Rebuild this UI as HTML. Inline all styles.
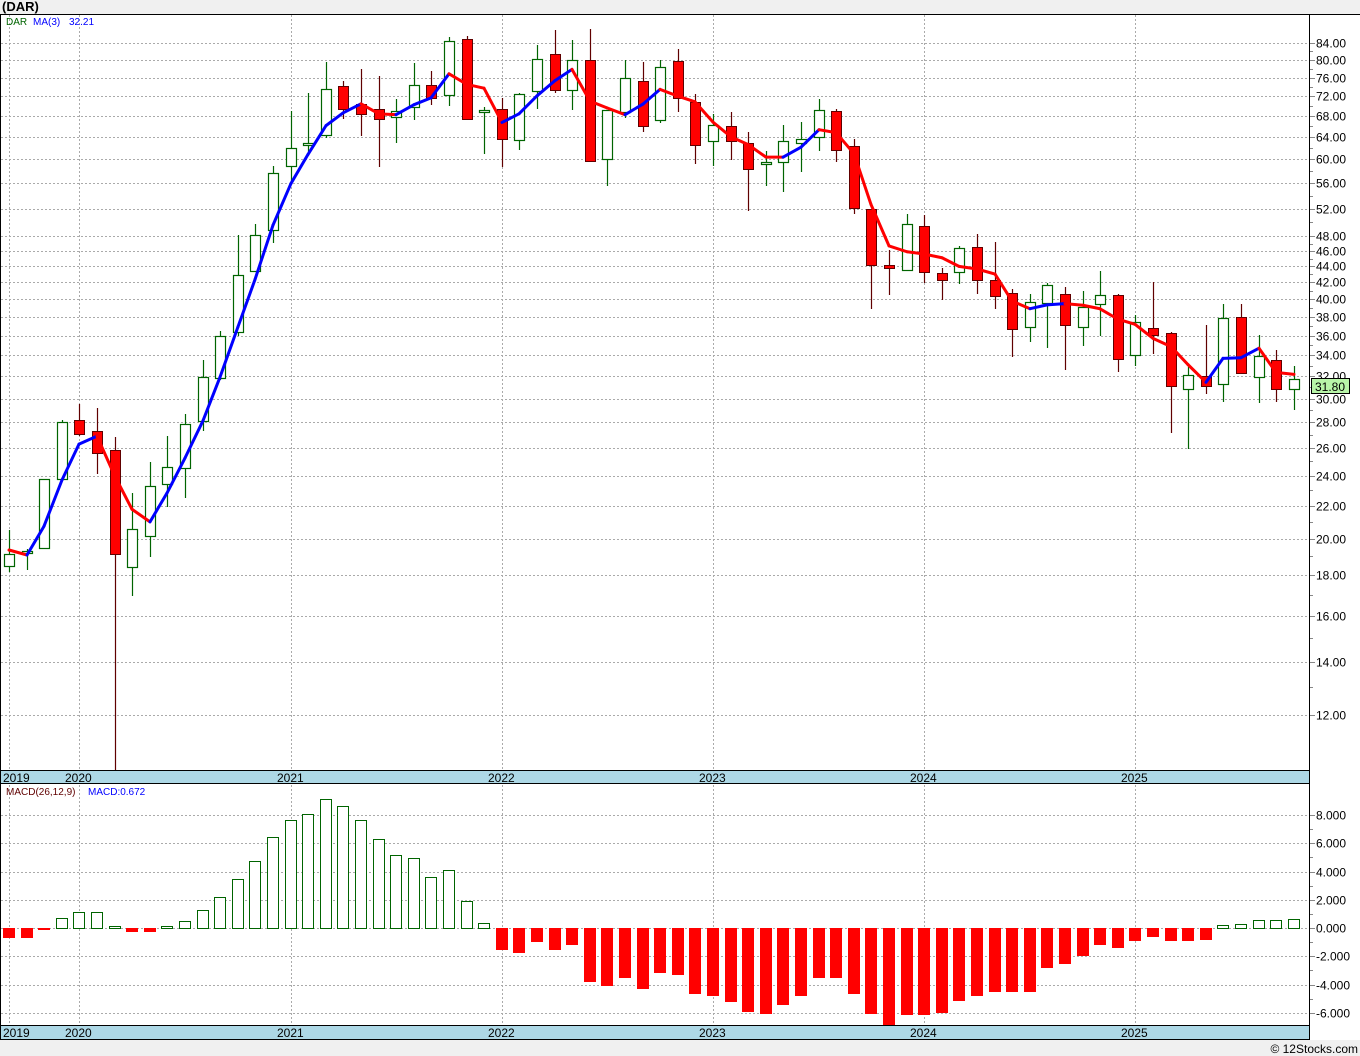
<!DOCTYPE html>
<html><head><meta charset="utf-8"><style>
html,body{margin:0;padding:0;background:#fff;}
body{width:1360px;height:1056px;overflow:hidden;position:relative;font-family:"Liberation Sans",sans-serif;}
svg{position:absolute;left:0;top:0;}
</style></head><body>
<svg id="s" width="1360" height="1056" xmlns="http://www.w3.org/2000/svg" font-family="Liberation Sans, sans-serif">
<rect x="0" y="0" width="1360" height="1056" fill="#fff"/>
<rect x="0" y="0" width="1360" height="14" fill="#f0f0f0"/>
<text x="2" y="11" font-size="13" font-weight="bold" fill="#000">(DAR)</text>
<rect x="0" y="1040" width="1360" height="16" fill="#f0f0f0"/>
<text x="1358" y="1053" font-size="12" fill="#000" text-anchor="end">© 12Stocks.com</text>
<g id="g"></g>
</svg>
<script>
var NS="http://www.w3.org/2000/svg",g=document.getElementById("g");
function el(t,a,txt){var e=document.createElementNS(NS,t);for(var k in a)e.setAttribute(k,a[k]);if(txt!==undefined)e.textContent=txt;g.appendChild(e);return e;}
function py(p){return 43+345.3*Math.log(84/p);}
function yp(y){return 84*Math.exp(-(y-43)/345.3);}
var yrs=[[9,"2019"],[79,"2020"],[291,"2021"],[502,"2022"],[713,"2023"],[924,"2024"],[1135,"2025"]];
var lv=[12,14,16,18,20,22,24,26,28,30,32,34,36,38,40,42,44,46,48,52,56,60,64,68,72,76,80,84];
lv.forEach(function(p){var y=Math.round(py(p))+.5;el("line",{x1:1,y1:y,x2:1309,y2:y,stroke:"#aaa","stroke-dasharray":"2,2"});el("line",{x1:1309,y1:y,x2:1315,y2:y,stroke:"#888"});el("text",{x:1316,y:y+4,"font-size":"12",fill:"#000"},p.toFixed(2));});
[50,54,58,62,66,70,74,78,82,13,15,17,19,21,23,25,27,29,31,33,35,37,39,41,43,45,47].forEach(function(p){var y=Math.round(py(p))+.5;el("line",{x1:1309,y1:y,x2:1313,y2:y,stroke:"#888"});});
[8,6,4,2,0,-2,-4,-6].forEach(function(v){var y=Math.round(928-14.125*v)+.5;el("line",{x1:1,y1:y,x2:1309,y2:y,stroke:"#aaa","stroke-dasharray":"2,2"});el("line",{x1:1309,y1:y,x2:1315,y2:y,stroke:"#888"});el("text",{x:1316,y:y+4,"font-size":"12",fill:"#000"},v.toFixed(3));});
[7,5,3,1,-1,-3,-5].forEach(function(v){var y=Math.round(928-14.125*v)+.5;el("line",{x1:1309,y1:y,x2:1313,y2:y,stroke:"#888"});});
yrs.forEach(function(a){el("line",{x1:a[0]+.5,y1:15,x2:a[0]+.5,y2:770,stroke:"#aaa","stroke-dasharray":"2,2"});el("line",{x1:a[0]+.5,y1:785,x2:a[0]+.5,y2:1025,stroke:"#aaa","stroke-dasharray":"2,2"});});
var C=[[554,566,530,572,1],[551,553,549,570,1],[479,548,479,548,1],[422,479,420,479,1],[420,434,404,436,0],[431,453,408,474,0],[450,554,437,770,0],[529,567,493,596,1],[486,536,462,557,1],[467,484,436,507,1],[424,468,414,498,1],[377,421,360,431,1],[336,378,331,380,1],[275,332,235,336,1],[235,271,224,243,1],[173,230,166,243,1],[148,166,111,183,1],[143,145,93,152,1],[89,135,62,138,1],[86,109,81,119,0],[104,114,69,136,0],[109,119,76,167,0],[111,117,99,143,1],[85,107,63,120,1],[85,98,71,105,0],[41,95,37,106,1],[39,119,36,119,0],[110,112,107,154,1],[109,139,98,167,0],[94,140,93,150,1],[59,91,45,109,1],[54,90,30,93,0],[60,90,40,110,1],[60,161,29,161,0],[110,159,110,186,1],[78,112,60,118,1],[81,126,62,132,0],[67,120,60,123,1],[61,98,49,112,0],[102,145,94,164,0],[125,141,114,166,1],[126,141,112,160,0],[143,169,132,211,0],[162,164,151,186,1],[141,162,125,192,1],[139,143,122,172,1],[110,137,99,151,1],[111,150,109,162,0],[146,208,139,214,0],[209,265,209,309,0],[265,268,250,295,0],[224,270,214,271,1],[226,272,215,283,0],[273,280,268,300,0],[248,272,246,284,1],[247,280,234,294,0],[280,296,242,309,0],[293,329,289,357,0],[302,327,294,342,1],[285,303,283,348,1],[294,325,287,370,0],[307,327,291,346,1],[295,304,271,336,1],[295,359,294,372,0],[322,355,315,366,1],[328,335,282,354,0],[333,386,332,433,0],[375,389,367,449,1],[376,386,325,394,0],[318,384,304,402,1],[317,373,304,374,0],[356,377,335,403,1],[360,389,350,402,0],[379,389,366,410,1]];
function cx(i){return Math.round(9+17.6*i);}
var M=[938,938,930,918,912,912,926,932,932,926,921,910,897,879,861,837,820,814,799,806,820,839,855,858,877,870,901,923,950,953,942,950,945,982,986,978,989,973,975,994,996,1002,1012,1014,1005,996,978,978,994,1014,1025,1015,1015,1013,1001,996,992,992,992,968,964,956,945,948,941,937,941,941,940,925,924,920,920,919];
M.forEach(function(y,i){var x=cx(i)-6;if(y<928)el("rect",{x:x+.5,y:y+.5,width:11,height:928-y,fill:"#fff",stroke:"#006400"});else el("rect",{x:x,y:928,width:12,height:y-928,fill:"#f00"});});
C.forEach(function(c,i){var x=cx(i);var up=c[4];var wc=up?"#006400":"#600000";
el("line",{x1:x+.5,y1:c[2],x2:x+.5,y2:c[3],stroke:wc,"stroke-width":1.2});
var h=Math.max(c[1]-c[0],1);
if(up)el("rect",{x:x-4.5,y:c[0]+.5,width:10,height:h,fill:"#fff",stroke:"#006400","stroke-width":1.2});
else el("rect",{x:x-4.5,y:c[0]+.5,width:10,height:h,fill:"#f00",stroke:"#600000","stroke-width":1});});
var cl=C.map(function(c){return yp(c[4]?c[0]:c[1]);});
var ma=cl.map(function(v,i){var a=cl.slice(Math.max(0,i-2),i+1);return py(a.reduce(function(s,x){return s+x;},0)/a.length);});
ma[0]=550;ma[1]=Math.max(ma[1],555);
for(var i=1;i<ma.length;i++){var col=ma[i]<ma[i-1]?"#0000ff":"#ff0000";el("line",{x1:cx(i-1),y1:ma[i-1],x2:cx(i),y2:ma[i],stroke:col,"stroke-width":3,"stroke-linecap":"round"});}
el("line",{x1:0,y1:14.5,x2:1360,y2:14.5,stroke:"#000"});
el("line",{x1:.5,y1:14,x2:.5,y2:1040,stroke:"#000"});
el("line",{x1:1309.5,y1:14,x2:1309.5,y2:1040,stroke:"#000"});
[[770,784],[1025,1040]].forEach(function(b){el("rect",{x:1,y:b[0],width:1308,height:b[1]-b[0],fill:"#add8e6"});el("line",{x1:0,y1:b[0]+.5,x2:1310,y2:b[0]+.5,stroke:"#000"});el("line",{x1:0,y1:b[1]-.5,x2:1310,y2:b[1]-.5,stroke:"#000"});
yrs.forEach(function(a,k){el("text",{x:k==0?3:a[0]-14,y:b[0]+12,"font-size":"12",fill:"#000"},a[1]);});});
el("rect",{x:1311.5,y:378.5,width:38,height:15,fill:"#b8f5a8",stroke:"#000"});
el("text",{x:1315,y:391,"font-size":"12",fill:"#000"},"31.80");
el("text",{x:6,y:25,"font-size":"10",fill:"#006400"},"DAR");
el("text",{x:33,y:25,"font-size":"10",fill:"#0000ff"},"MA(3)");
el("text",{x:69,y:25,"font-size":"10",fill:"#0000ff"},"32.21");
el("text",{x:6,y:795,"font-size":"10",fill:"#600000"},"MACD(26,12,9)");
el("text",{x:88,y:795,"font-size":"10",fill:"#0000ff"},"MACD:0.672");
</script>
</body></html>
